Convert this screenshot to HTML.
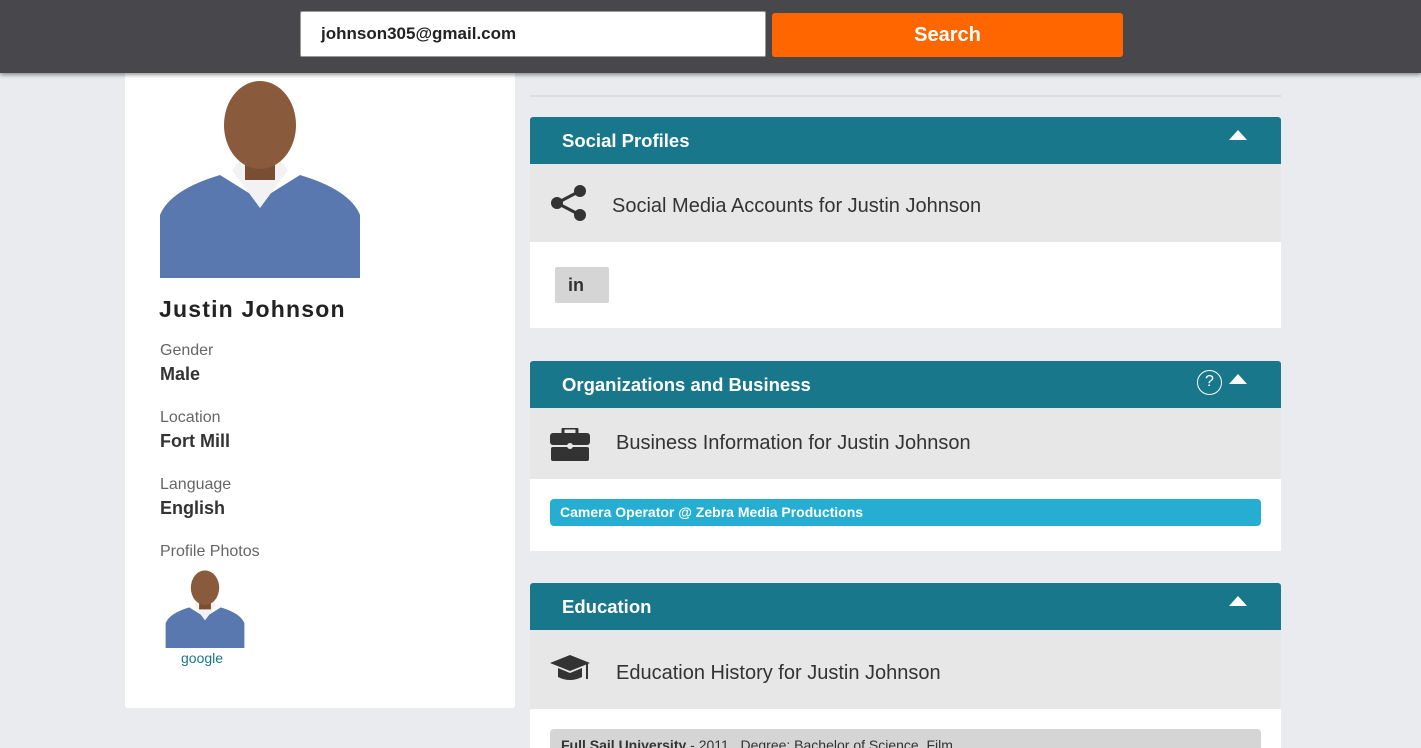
<!DOCTYPE html>
<html style="width:1421px;height:748px;overflow:hidden"><head><style>
*{box-sizing:border-box;margin:0;padding:0}
body{width:1421px;height:748px;overflow:hidden;background:#e9ebee;font-family:"Liberation Sans",sans-serif;position:relative}
.top{position:absolute;left:0;top:0;width:1421px;height:73px;background:#48484c;box-shadow:0 2px 4px rgba(0,0,0,.4);z-index:5}
.inp{position:absolute;left:300px;top:11px;width:466px;height:46px;background:#fff;border:1px solid #999;border-radius:2px;font-weight:bold;font-size:17px;color:#222;padding:12px 0 0 20px}
.btn{position:absolute;left:772px;top:13px;width:351px;height:44px;background:#ff6600;border-radius:3px;color:#fff;font-weight:bold;font-size:20px;text-align:center;line-height:44px}
.left{position:absolute;left:125px;top:60px;width:390px;height:648px;background:#fff;border-radius:3px}
.lab{position:absolute;left:35px;color:#666;font-size:16px}
.val{position:absolute;left:35px;color:#333;font-size:18px;font-weight:bold}
.sec{position:absolute;left:530px;width:751px}
.hd{height:47px;background:#19778c;color:#fff;font-weight:bold;font-size:18.5px;padding-left:32px;line-height:47px;border-radius:3px 3px 0 0;position:relative}
.tri{position:absolute;right:34px;top:13px;width:0;height:0;border-left:9px solid transparent;border-right:9px solid transparent;border-bottom:10px solid #fff}
.sub{background:#e7e7e7;position:relative;color:#333;font-size:20px}
.body{background:#fff;position:relative;overflow:hidden}
</style></head><body>
<div class="top"><div class="inp">johnson305@gmail.com</div><div class="btn">Search</div></div>
<div class="left">
<svg style="position:absolute;left:35px;top:20px" width="200" height="198" viewBox="0 0 200 198">
<rect width="200" height="198" fill="#fff"/>
<path d="M0 198 L0 135 Q10 110 60 95 L100 120 L140 95 Q190 110 200 135 L200 198Z" fill="#5a78b0"/>
<path d="M72 90 L100 128 L128 90 L120 80 L80 80Z" fill="#f2f2f2"/>
<rect x="85" y="70" width="30" height="30" fill="#7a4e32"/>
<ellipse cx="100" cy="45" rx="36" ry="44" fill="#8a5a3c"/>
</svg>
<div style="position:absolute;left:34px;top:236px;font-size:23px;font-weight:bold;color:#222;letter-spacing:1.2px">Justin Johnson</div>
<div class="lab" style="top:282px">Gender</div><div class="val" style="top:304px">Male</div>
<div class="lab" style="top:349px">Location</div><div class="val" style="top:371px">Fort Mill</div>
<div class="lab" style="top:416px">Language</div><div class="val" style="top:438px">English</div>
<div class="lab" style="top:483px">Profile Photos</div>
<svg style="position:absolute;left:40px;top:510px" width="80" height="78" viewBox="0 0 200 198">
<rect width="200" height="198" fill="#fff"/>
<path d="M0 198 L0 135 Q10 110 60 95 L100 120 L140 95 Q190 110 200 135 L200 198Z" fill="#5a78b0"/>
<path d="M72 90 L100 128 L128 90 L120 80 L80 80Z" fill="#f2f2f2"/>
<rect x="85" y="70" width="30" height="30" fill="#7a4e32"/>
<ellipse cx="100" cy="45" rx="36" ry="44" fill="#8a5a3c"/>
</svg>
<div style="position:absolute;left:56px;top:590px;color:#19778c;font-size:14px">google</div>
</div>
<div style="position:absolute;left:530px;top:95px;width:751px;height:2px;background:#dcdcdc"></div>

<div class="sec" style="top:117px">
<div class="hd">Social Profiles<div class="tri"></div></div>
<div class="sub" style="height:78px">
<svg style="position:absolute;left:19px;top:20px" width="40" height="40" viewBox="0 0 40 40"><g stroke="#333" stroke-width="3"><line x1="8" y1="19" x2="31" y2="7"/><line x1="8" y1="19" x2="31" y2="31"/></g><circle cx="8" cy="19" r="6" fill="#333"/><circle cx="31" cy="7" r="6" fill="#333"/><circle cx="31" cy="31" r="6" fill="#333"/></svg>
<div style="position:absolute;left:82px;top:31px">Social Media Accounts for Justin Johnson</div></div>
<div class="body" style="height:86px"><div style="position:absolute;left:25px;top:25px;width:54px;height:36px;background:#d5d5d5;border-radius:2px;font-weight:bold;font-size:18px;color:#333;padding:8px 0 0 13px">in</div></div>
</div>

<div class="sec" style="top:361px">
<div class="hd">Organizations and Business<div class="tri"></div>
<div style="position:absolute;right:59px;top:9px;width:25px;height:25px;border:1.5px solid #fff;border-radius:50%;font-size:16px;font-weight:normal;line-height:22px;text-align:center">?</div></div>
<div class="sub" style="height:71px">
<svg style="position:absolute;left:20px;top:20px" width="40" height="33" viewBox="0 0 40 33"><path d="M13 5 V2 Q13 0 15 0 H25 Q27 0 27 2 V5" stroke="#333" stroke-width="3" fill="none"/><rect x="0" y="5" width="40" height="12" rx="3" fill="#333"/><rect x="1" y="19" width="38" height="14" rx="2" fill="#333"/><circle cx="20" cy="18" r="3" fill="#e7e7e7"/></svg>
<div style="position:absolute;left:86px;top:24px">Business Information for Justin Johnson</div></div>
<div class="body" style="height:72px"><div style="position:absolute;left:20px;top:20px;width:711px;height:27px;background:#25aed1;border-radius:4px;color:#fff;font-weight:bold;font-size:14px;padding:5px 0 0 10px">Camera Operator @ Zebra Media Productions</div></div>
</div>

<div class="sec" style="top:583px">
<div class="hd">Education<div class="tri"></div></div>
<div class="sub" style="height:79px">
<svg style="position:absolute;left:20px;top:25px" width="40" height="28" viewBox="0 0 40 28"><path d="M20 0 L40 8 L20 16 L0 8Z" fill="#333"/><path d="M8 13 V22 Q20 28 32 22 V13 L20 18Z" fill="#333"/><line x1="37" y1="9" x2="37" y2="24" stroke="#333" stroke-width="2"/></svg>
<div style="position:absolute;left:86px;top:32px">Education History for Justin Johnson</div></div>
<div class="body" style="height:39px"><div style="position:absolute;left:20px;top:20px;width:711px;height:30px;background:#d5d5d5;border-radius:4px;color:#333;font-size:14px;padding:8px 0 0 11px"><b>Full Sail University</b> - 2011 , Degree: Bachelor of Science, Film</div></div>
</div>
</body></html>
